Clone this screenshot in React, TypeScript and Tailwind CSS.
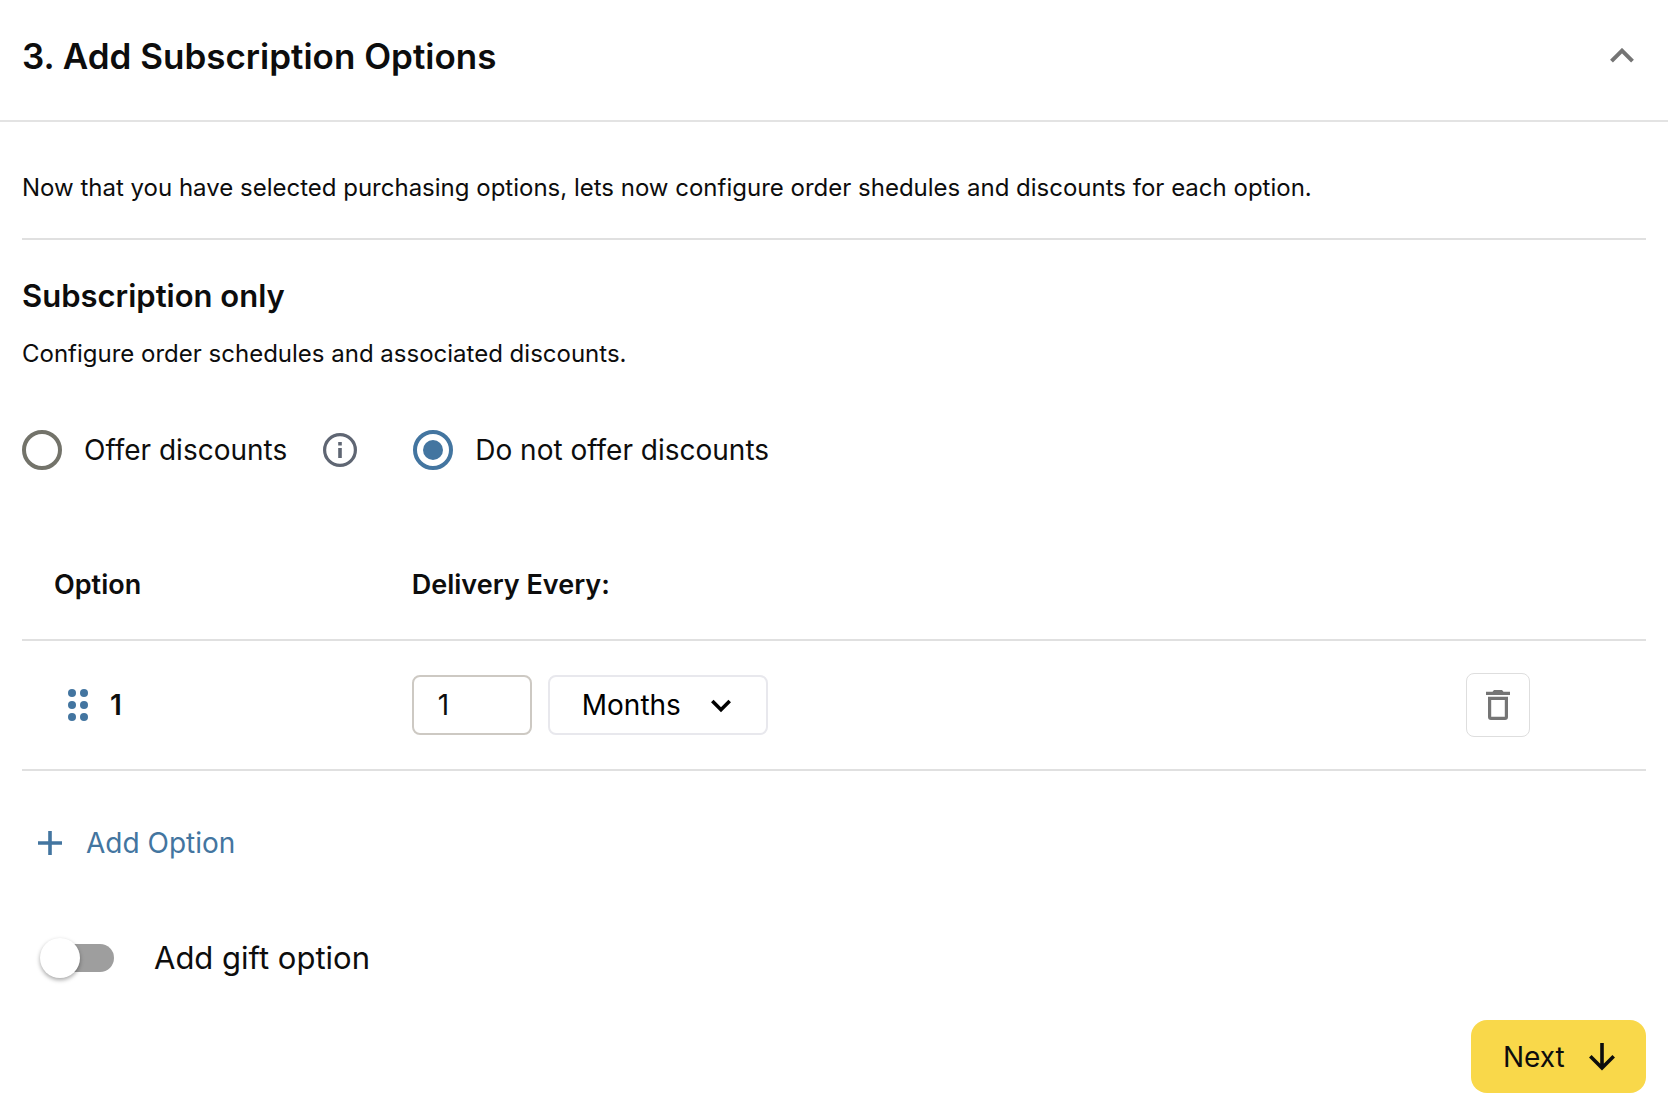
import { useState } from "react"

type Unit = "Days" | "Weeks" | "Months"

interface DeliveryOption {
  id: number
  every: string
  unit: Unit
}

function InfoIcon() {
  return (
    <svg className="size-[34px]" viewBox="0 0 34 34" fill="none" aria-hidden="true">
      <circle cx="17" cy="17" r="15.4" stroke="#5f6673" strokeWidth="3.2" />
      <path d="M15.2 9h3.6v3.4h-3.6zM15.2 15h3.6v10h-3.6z" fill="#5f6673" />
    </svg>
  )
}

function DragIcon() {
  return (
    <svg className="h-8 w-5" viewBox="0 0 20 32" fill="#4375a0" aria-hidden="true">
      {[4, 16, 28].map((y) => (
        <g key={y}>
          <circle cx="4" cy={y} r="4" />
          <circle cx="16" cy={y} r="4" />
        </g>
      ))}
    </svg>
  )
}

function TrashIcon() {
  return (
    <svg className="h-[30px] w-6" viewBox="0 0 24 30" aria-hidden="true">
      <path d="M0 1.700h6.500L8 0h8l1.500 1.700H24V5H0z" fill="#757575" />
      <path
        d="M2 6.700h20V27a3 3 0 0 1-3 3H5a3 3 0 0 1-3-3zM5.200 10v16.800h13.600V10z"
        fill="#757575"
        fillRule="evenodd"
      />
    </svg>
  )
}

const radioClass =
  "grid size-10 shrink-0 cursor-pointer appearance-none place-items-center rounded-full border-4 border-[#73736a] before:size-5 before:rounded-full checked:border-[#4375a0] checked:before:bg-[#4375a0]"

export default function App() {
  const [open, setOpen] = useState(true)
  const [discounts, setDiscounts] = useState(false)
  const [gift, setGift] = useState(false)
  const [options, setOptions] = useState<DeliveryOption[]>([{ id: 1, every: "1", unit: "Months" }])

  const update = (id: number, patch: Partial<DeliveryOption>) => {
    setOptions((prev) => prev.map((o) => (o.id === id ? { ...o, ...patch } : o)))
  }

  const addOption = () => {
    setOptions((prev) => [...prev, { id: Date.now(), every: "1", unit: "Months" }])
  }

  const removeOption = (id: number) => {
    setOptions((prev) => prev.filter((o) => o.id !== id))
  }

  return (
    <section className="min-h-screen bg-white font-[Inter,'Liberation_Sans',sans-serif] text-[#0d0d0d]">
      <header className="flex items-center justify-between border-b-2 border-[#e3e3e3] pt-8 pr-[34px] pb-10 pl-[22px]">
        <h2 className="text-[35px] leading-12 font-semibold">3. Add Subscription Options</h2>
        <button
          type="button"
          aria-label="Toggle section"
          aria-expanded={open}
          onClick={() => setOpen(!open)}
          className="cursor-pointer"
        >
          <svg className="h-4 w-6" viewBox="0 0 24 16" fill="none" aria-hidden="true">
            <path d="M1.500 13.200 12 2.700l10.500 10.500" stroke="#757575" strokeWidth="4" />
          </svg>
        </button>
      </header>

      {open && (
        <div className="px-[22px] pb-4">
          <p className="border-b-2 border-[#e0e0e0] pt-12 pb-8 text-2xl leading-9">
            Now that you have selected purchasing options, lets now configure order shedules and discounts for each
            option.
          </p>

          <h3 className="mt-9 text-[31px] leading-10 font-semibold">Subscription only</h3>
          <p className="mt-5 text-2xl leading-9">Configure order schedules and associated discounts.</p>

          {/* Discount choice */}
          <div className="mt-[58px] flex items-center text-[28px] leading-10">
            <label className="flex cursor-pointer items-center gap-[22px]">
              <input
                type="radio"
                name="discounts"
                className={radioClass}
                checked={discounts}
                onChange={() => setDiscounts(true)}
              />
              Offer discounts
            </label>
            <button type="button" aria-label="About discounts" className="mr-14 ml-9 cursor-pointer">
              <InfoIcon />
            </button>
            <label className="flex cursor-pointer items-center gap-[22px]">
              <input
                type="radio"
                name="discounts"
                className={radioClass}
                checked={!discounts}
                onChange={() => setDiscounts(false)}
              />
              Do not offer discounts
            </label>
          </div>

          {/* Delivery schedule */}
          <table className="mt-[61px] w-full border-separate border-spacing-0 text-[28px] leading-10">
            <thead>
              <tr className="h-[110px] text-left text-[27px]">
                <th className="w-[24%] border-b-2 border-[#e0e0e0] pl-8 font-semibold">Option</th>
                <th className="border-b-2 border-[#e0e0e0] font-semibold">Delivery Every:</th>
                <th className="border-b-2 border-[#e0e0e0]" aria-label="Actions" />
              </tr>
            </thead>
            <tbody>
              {options.map((option, index) => (
                <tr key={option.id} className="h-[130px]">
                  <td className="border-b-2 border-[#e0e0e0] pl-[46px]">
                    <div className="flex items-center gap-[22px] font-semibold">
                      <DragIcon />
                      {index + 1}
                    </div>
                  </td>
                  <td className="border-b-2 border-[#e0e0e0]">
                    <div className="flex items-center gap-4">
                      <input
                        type="text"
                        inputMode="numeric"
                        aria-label="Delivery interval"
                        value={option.every}
                        onChange={(e) => update(option.id, { every: e.target.value })}
                        className="h-[60px] w-[120px] rounded-lg border-2 border-[#cdc9c3] px-6"
                      />
                      <div className="relative">
                        <select
                          aria-label="Delivery unit"
                          value={option.unit}
                          onChange={(e) => update(option.id, { unit: e.target.value as Unit })}
                          className="h-[60px] w-[220px] cursor-pointer appearance-none rounded-lg border-2 border-[#e8e8ed] bg-white pl-8 text-black"
                        >
                          <option>Days</option>
                          <option>Weeks</option>
                          <option>Months</option>
                        </select>
                        <svg
                          className="pointer-events-none absolute top-6 right-[37px] h-[14px] w-5"
                          viewBox="0 0 20 14"
                          fill="none"
                          aria-hidden="true"
                        >
                          <path d="M1.300 2l8.700 8.700L18.700 2" stroke="#000" strokeWidth="3.600" />
                        </svg>
                      </div>
                    </div>
                  </td>
                  <td className="border-b-2 border-[#e0e0e0] pr-[116px]">
                    <button
                      type="button"
                      aria-label="Delete option"
                      onClick={() => removeOption(option.id)}
                      className="ml-auto flex size-16 cursor-pointer items-center justify-center rounded-lg border border-[#dedede]"
                    >
                      <TrashIcon />
                    </button>
                  </td>
                </tr>
              ))}
            </tbody>
          </table>

          <button
            type="button"
            onClick={addOption}
            className="mt-[52px] ml-4 flex cursor-pointer items-center gap-6 text-[28px] leading-10 text-[#4375a0]"
          >
            <svg className="size-6" viewBox="0 0 24 24" fill="none" aria-hidden="true">
              <path d="M12 0v24M0 12h24" stroke="#4375a0" strokeWidth="3.600" />
            </svg>
            Add Option
          </button>

          <label className="mt-[75px] ml-[18px] flex w-fit cursor-pointer items-center gap-10 text-[31px] leading-10">
            <input
              type="checkbox"
              role="switch"
              checked={gift}
              onChange={(e) => setGift(e.target.checked)}
              className="ml-1.5 flex h-7 w-[68px] cursor-pointer appearance-none items-center rounded-full bg-[#9e9e9e] before:-ml-1.5 before:size-10 before:shrink-0 before:rounded-full before:bg-white before:shadow-[0_2px_4px_rgba(0,0,0,0.35)] checked:bg-[#4375a0] checked:before:ml-[34px]"
            />
            Add gift option
          </label>

          <div className="mt-[42px] flex justify-end">
            <button
              type="button"
              className="flex h-[73px] w-[175px] cursor-pointer items-center justify-between rounded-2xl bg-[#f9d84a] pr-[31px] pl-8 text-[28px] leading-10"
            >
              Next
              <svg className="h-7 w-[26px]" viewBox="0 0 26 28" fill="none" aria-hidden="true">
                <path d="M13 0v25M1.300 13.300 13 25l11.700-11.700" stroke="#0d0d0d" strokeWidth="3.600" />
              </svg>
            </button>
          </div>
        </div>
      )}
    </section>
  )
}
